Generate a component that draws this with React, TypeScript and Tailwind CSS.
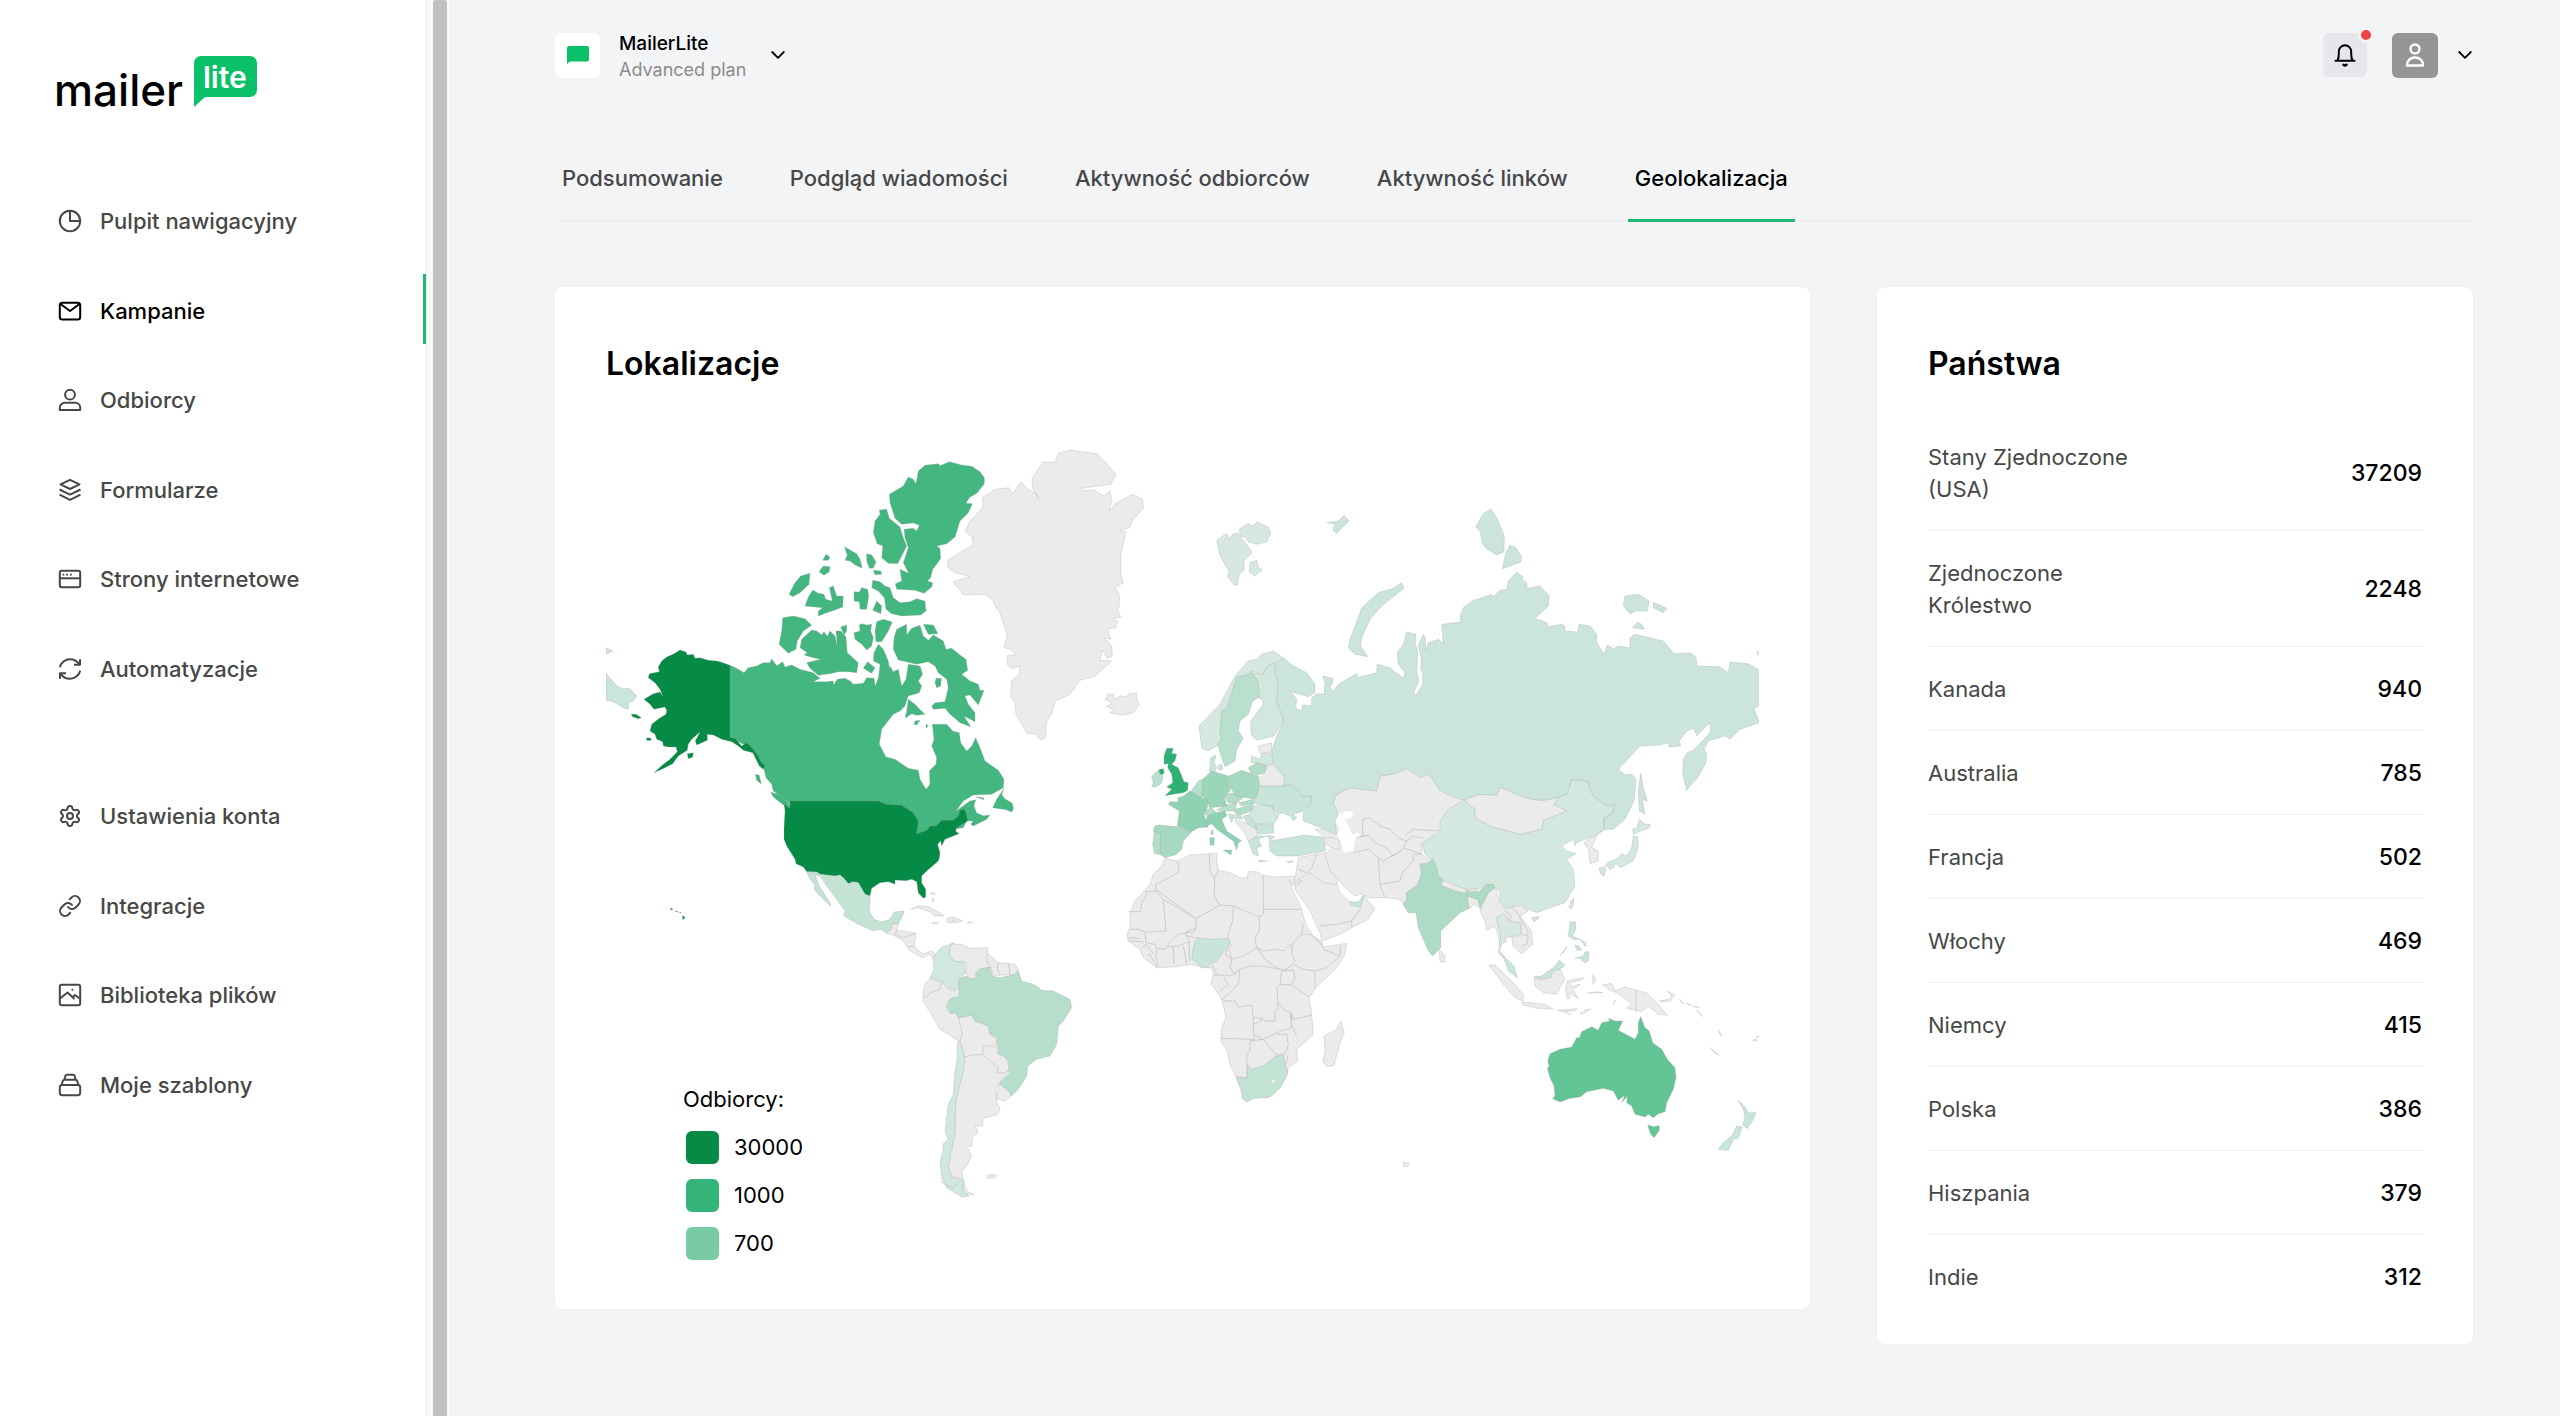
import React from "react";
import { Link as LinkIcon, Settings } from "lucide-react";

type TileId = "A" | "B" | "C" | "D" | "E" | "F" | "G";
type Part = [TileId, string];

/* Outlines are digitised on tiles; every tile has an origin and is three units per map unit. */
const ORIGIN: Record<TileId, [number, number]> = {
  A: [600, 430],
  B: [920, 430],
  C: [780, 760],
  D: [1120, 500],
  E: [1110, 820],
  F: [1400, 480],
  G: [1380, 820],
};

function toPoints(parts: Part[]): string {
  return parts
    .map(([tile, pts]) => {
      const [ox, oy] = ORIGIN[tile];
      return pts
        .trim()
        .split(/\s+/)
        .map((p) => {
          const [x, y] = p.split(",").map(Number);
          return `${(ox + x / 3).toFixed(1)},${(oy + y / 3).toFixed(1)}`;
        })
        .join(" ");
    })
    .join(" ");
}

const GRAY = "#ebebeb";
const US = "#068b47";
const CA = "#43b77f";
const RU = "#cbe5da";
const L1 = "#d3e8df";
const L2 = "#c8e5d9";
const L3 = "#b9dfce";

/* Each entry: fill, tile, outlines separated by ";" */
const LAND: [string, TileId, string][] = [
  [CA, "A", `390,703 410,712 432,725 445,710 470,705 490,695 510,695 515,683 530,704 548,692 555,708 575,702 600,715 640,725 660,742 640,752 680,752 700,750 700,762 712,745 735,742 750,750 760,760 790,757 800,740 822,742 826,765 838,735 860,730 870,705 880,722 895,715 905,765 918,745 925,700 960,705 968,730 955,750 965,765 958,785 925,795 915,825 900,840 880,850 845,895 838,940 858,978 885,985 925,1012 955,1018 960,1045 978,1075 990,1060 988,1020 1008,1000 1010,980 995,945 1002,925 997,880 1040,880 1058,900 1078,905 1082,935 1100,960 1115,945 1127,920 1140,950 1155,990 1195,1018 1212,1045 1210,1070 1175,1090 1120,1092 1090,1110 1068,1140 1085,1128 1110,1110 1127,1106 1122,1125 1130,1146 1150,1154 1170,1152 1160,1165 1120,1185 1112,1180 1120,1170 1100,1170 1090,1190 950,1210 940,1160 570,1118 548,1100 520,1080 515,1060 498,1040 492,1015 478,990 460,960 430,940 390,920;
512,1083 540,1092 565,1115 570,1134 545,1118 520,1098; 466,1030 478,1033 484,1060 470,1048;
1212,1072 1205,1090 1215,1104 1235,1115 1241,1132 1235,1143 1218,1136 1178,1130 1190,1105; 1127,1097 1150,1100 1152,1106;
1048,92 1085,102 1115,106 1140,122 1153,140 1153,158 1132,185 1108,200 1098,217 1117,218 1105,245 1080,270 1065,318 1040,338 1010,345 1020,352 1022,382 1010,400 998,415 992,440 982,450 998,455 995,468 972,487 945,478 890,475 886,458 905,450 900,415 926,427 910,395 925,350 915,320 912,295 940,292 950,300 958,283 940,276 905,280 885,262 870,215 868,190 910,165 925,138 940,145 948,158 955,120 975,103 1015,98 1020,104;
838,237 860,235 868,262 900,288 910,320 920,345 905,375 893,398 865,397 845,380 848,345 832,338 820,305 825,270 840,250;
733,347 770,368 780,385 787,412 765,402 750,390 735,388 742,372; 800,368 815,372 828,392 820,412 808,412 800,390; 820,418 842,420 846,430 825,431; 678,370 690,378 685,388 668,388; 670,405 690,407 688,422 672,433 657,422;
630,427 627,460 600,485 578,497 567,490 585,455 602,435;
638,477 655,487 672,490 677,505 697,510 688,470 700,465 710,495 730,495 728,528 705,537 680,545 655,555 655,540 668,530 615,525 625,498;
762,482 778,483 785,470 803,475 806,495 800,535 780,535 778,512 762,510;
818,448 840,452 855,465 870,470 880,500 900,515 930,512 950,503 975,510 978,540 962,552 905,555 875,548 858,535 853,500 835,480 815,470; 830,510 845,525 843,548 818,538;
548,560 580,555 615,563 635,583 610,600 592,630 588,655 565,667 537,640 545,600;
600,650 605,625 635,597 650,600 665,612 672,602 682,616 690,600 705,615 712,645 708,600 722,600 738,618 742,665 775,695 770,725 745,722 715,722 690,728 655,733 630,712 620,695 662,685 640,680 612,672 622,665;
722,588 740,582 740,600 732,612; 762,605 780,600 778,582 785,578 800,582 815,580 812,600 820,620 815,645 800,657 785,640 765,625;
830,572 850,565 877,573 865,600 845,632 828,632 825,600; 835,640 850,655 865,690 872,745 835,745 840,700 820,690 822,665; 803,692 825,710 815,727 790,712;
890,595 920,580 920,612 935,592 960,583 970,615 985,628 1000,612 1030,630 1038,655 1055,652 1080,672 1098,685 1103,718 1085,730 1110,750 1135,760 1140,778 1152,778 1135,822 1110,792 1095,795 1105,820 1125,845 1125,872 1092,855 1112,887 1080,875 1050,850 1035,832 1000,835 995,825 1005,815 1035,812 1045,770 1040,745 1015,725 1005,705 985,692 950,700 895,687 880,655 882,620;
970,580 1000,582 1014,608 985,610; 1008,742 1024,742 1022,765 1010,770 1005,755; 925,805 945,820 962,838 975,850 950,853 935,848 915,862 920,840; 945,870 960,868 950,882 942,880; 978,878 985,885 978,892`],
  [US, "A", `240,657 258,663 262,672 280,670 285,682 300,680 325,688 350,690 362,693 390,703 390,920 405,922 425,945 440,935 460,955 475,975 482,992 495,1003 490,1015 478,1005 468,985 458,965 430,958 415,945 395,932 365,925 340,912 322,910 322,928 290,942 286,930 300,903 275,925 265,940 262,958 235,975 218,998 195,1010 162,1025 190,1000 210,985 232,962 228,948 205,948 190,945 188,932 170,925 165,910 150,900 155,880 178,862 198,850 200,838 195,828 162,835 150,820 132,805 160,788 180,783 188,795 180,775 165,755 145,740 148,728 178,722 175,708 185,690 200,678 222,668; 93,850 108,850 124,860 115,863 98,857; 138,922 150,920 155,927 142,929; 262,968 280,965 278,978 265,983; 210,1433 216,1432 218,1436 212,1437; 225,1440 232,1440 232,1444; 238,1443 244,1445 240,1447; 247,1453 256,1460 248,1466`],
  [US, "C", `12,128 28,142 30,120 295,120 320,130 365,133 400,155 415,180 410,218 440,208 450,195 468,195 485,178 520,178 535,165 540,148 553,143 560,160 563,180 530,200 527,210 537,218 520,225 495,235 485,255 482,240 473,250 480,275 478,292 475,300 440,330 425,345 425,365 437,385 437,408 430,412 415,395 410,362 395,355 378,359 345,357 345,370 325,362 300,365 275,382 270,405 255,400 235,365 218,362 205,368 190,350 180,342 165,345 120,340 110,333 80,332 70,318 48,308 45,295 20,255 12,235 12,200 15,150`],
  [GRAY, "B", `450,57 530,68 560,98 588,130 572,160 485,172 488,180 520,176 552,195 570,180 575,210 568,238 590,215 637,190 668,205 670,232 640,265 628,290 598,298 618,302 602,370 602,430 610,455 585,470 598,492 598,525 592,535 602,558 580,562 592,572 587,590 562,595 573,625 552,620 575,645 577,675 562,682 548,657 540,688 575,690 525,735 480,748 450,790 405,810 395,850 380,870 375,922 362,926 345,908 322,908 288,850 285,815 272,795 275,750 298,730 298,705 275,713 262,700 263,673 288,672 272,655 252,650 262,615 240,545 222,520 220,508 195,490 130,492 100,453 150,436 105,425 83,408 83,388 158,342 158,320 135,300 150,270 188,230 188,200 225,175 268,170 277,190 303,153 322,175 345,185 358,205 337,170 337,140 370,93 405,95 415,67;
555,805 565,790 580,790 583,805 600,795 618,797 630,787 650,787 650,805 658,820 640,845 608,853 570,845 580,838 560,825 575,820 570,812`],
  ["#c3e4d5", "C", `80,332 110,333 120,340 165,345 180,342 190,350 205,368 218,362 235,365 255,400 270,405 268,450 282,475 305,483 330,475 342,453 372,450 368,465 355,488 335,490 337,502 320,517 302,505 280,510 235,490 192,465 195,450 170,415 140,375 120,345 105,342 118,375 150,425 153,436 130,415 102,385 105,372 90,355`],
  [GRAY, "C", `320,517 337,502 335,490 355,488 350,508 375,510 408,517 403,555 415,568 430,578 455,570 465,580 460,592 448,580 430,590 410,582 385,565 370,540 345,525; 392,445 415,434 445,437 470,450 492,465 465,465 450,452 415,440; 500,472 520,468 548,480 530,485 500,484; 455,484 475,486 460,489; 562,483 577,484 565,487; 449,400 458,394 467,400 458,399; 456,411 463,420 459,425;
520,545 525,550 545,550 570,562 622,560 625,590 620,600 632,620 590,625 585,640 590,650 572,655 560,640 560,605 520,600 508,580 510,560; 622,580 640,590 655,605 705,610 715,625 705,640 655,643 640,645 632,615 620,600;
450,652 485,665 510,687 528,688 530,700 500,725 500,750 528,755 545,770 547,820 540,842 480,805 430,720 428,700 435,670; 535,770 575,762 585,780 625,795 630,820 650,835 648,860 612,855 605,880 580,882 555,888 540,842 547,820; 612,855 645,855 655,880 675,885 688,920 680,937 650,935 655,920 608,885;
555,888 580,882 605,880 655,920 650,937 675,937 688,925 658,967 648,985 650,1020 660,1045 650,1062 610,1072 607,1095 585,1095 595,1115 578,1125 575,1155 562,1158 575,1185 560,1215 545,1230 548,1252 518,1250 505,1220 515,1170 525,1100 525,1030 535,960 550,900; 550,1255 560,1290 582,1300 550,1300; 658,967 690,990 692,1005 675,1020 648,1015; 622,1243 636,1240 650,1243 645,1250 622,1252`],
  ["#d0e8df", "C", `520,545 510,560 508,580 520,600 555,603 557,640 535,648 538,685 510,685 485,663 450,650 462,625 460,590 470,575 485,558 505,552; 540,842 550,870 555,905 545,950 530,1010 525,1060 525,1120 510,1180 505,1220 518,1250 548,1255 550,1290 567,1305 545,1308 500,1280 485,1250 480,1200 490,1170 488,1150 505,1135 495,1110 505,1030 520,1000 525,930 532,890 532,845`],
  ["#b7decd", "C", `630,618 637,645 660,650 705,640 715,628 725,660 750,667 770,675 785,688 820,690 850,705 870,715 875,740 850,780 835,795 830,850 810,885 770,895 743,915 740,945 715,985 695,1005 690,995 658,967 688,935 685,900 672,885 655,880 650,830 630,820 625,795 585,780 575,762 535,770 528,755 510,758 500,735 510,715 535,705 538,650 560,645 572,655 590,650 587,635 600,625`],
  [GRAY, "E", `165,112 203,120 240,102 298,98 322,97 320,125 325,148 360,155 390,170 412,170 415,152 440,152 460,163 500,168 552,165 555,185 548,195 538,178 548,208 575,265 580,285 590,315 610,345 635,362 640,378 710,367 705,400 680,440 617,500 597,530 605,580 610,640 560,685 563,720 535,740 530,765 510,800 480,828 430,832 410,842 397,832 395,810 378,768 360,730 352,690 332,660 335,620 347,590 340,550 330,525 303,490 310,460 305,440 280,440 245,430 200,437 140,440 100,410 90,385 55,360 50,340 60,320 60,275 75,240 120,190 130,160 155,135; 693,600 703,635 690,665 672,733 650,737 638,720 645,690 642,645 680,625;
555,185 565,150 600,155 640,185 680,190 690,215 715,240 750,250 762,222 775,240 795,262 775,295 725,320 690,340 635,360 630,335 600,270 580,240 555,205; 565,110 600,103 650,95 665,150 685,165 680,190 640,185 600,155 565,175 552,190 560,140`],
  [L2, "E", `260,350 300,355 355,352 358,370 335,400 320,420 300,428 290,440 275,440 262,425 245,415 250,380; 720,243 745,243 762,222 758,240 750,258 722,253`],
  ["#c3e4d5", "E", `378,768 410,772 412,735 425,748 460,735 500,705 520,702 528,740 533,745 530,765 510,800 480,828 430,832 410,842 397,832 395,810`],
  [GRAY, "E", `480,782 492,772 500,780 488,790; 516,745 523,740 525,752 518,753`],
  [GRAY, "D", `585,985 610,985 645,1000 640,905 650,880 690,860 770,870 780,825 825,818 865,800 905,820 925,818 965,870 1030,893 985,935 960,985 905,1030 905,1060 930,1080 900,1100 905,1120 895,1150 865,1170 870,1195 850,1205 835,1195 795,1190 745,1190 730,1178 705,1185 675,1160 650,1130 630,1110 615,1060 635,1040 610,1005`],
  ["#ffffff", "D", `645,960 655,940 680,930 700,933 695,950 675,955 690,985 697,1000 715,995 722,1005 705,1015 700,1050 670,1055 665,1030 650,1000 660,985`],
  ["#2fb176", "D", `140,742 160,742 155,757 170,760 165,780 155,790 175,800 185,825 192,842 205,845 203,868 190,875 160,880 135,884 155,865 140,858 158,845 155,820 143,800 145,788 132,790 132,765; 118,805 130,803 133,815 125,823 117,815`],
  [L3, "D", `118,805 117,815 130,825 125,845 110,857 95,857 100,845 95,825`],
  ["#d6e8df", "D", `290,118 320,97 328,115 340,97 355,97 397,155 372,180 372,207 357,220 352,252 342,252 322,225 328,212 300,165; 357,85 385,68 400,75 410,62 445,78 452,97 440,123 410,130 385,123 375,108 362,105; 390,185 410,178 415,198 427,207 405,225 388,213; 237,675 300,610 345,525 385,480 410,475 425,460 460,450 490,470 480,490 460,485 440,500 430,520 395,510 385,520 350,530 320,620 305,630 300,690 305,715 290,735 262,750 245,740`],
  ["#d2e8de", "D", `392,515 430,520 440,500 460,485 475,500 468,520 475,545 470,600 492,660 462,705 410,718 393,700 392,660 430,610 428,597 415,590 415,545; 392,785 395,765 420,775 425,757 455,760 460,785 440,795 410,785; 400,915 455,912 475,950 460,970 400,968 385,945`],
  ["#b9dfce", "D", `350,530 385,520 395,510 415,545 418,588 398,600 385,640 360,660 355,690 370,712 350,745 345,780 315,797 300,755 293,730 305,715 300,690 305,630 322,620; 235,840 255,832 248,865 245,890 210,875; 315,912 350,905 345,930 315,930 290,928`],
  [L2, "D", `272,770 288,762 283,785 290,800 283,815 268,810; 293,795 305,790 308,805 297,808; 418,855 490,855 515,850 545,885 575,885 575,905 550,930 520,940 530,950 520,960 510,945 485,935 470,945 455,915 410,910 402,905 412,880; 405,970 460,972 462,995 415,1000; 370,945 385,942 405,970 410,985 385,975; 325,940 360,942 370,955 340,950 335,965; 385,1020 410,1005 440,1005 415,1015 425,1035 410,1040 415,1065 400,1060; 415,1078 442,1080 420,1083; 500,1082 520,1080 510,1086; 447,1020 480,1015 520,1008 550,1003 610,1008 617,1050 560,1060 535,1065 470,1065 450,1050; 440,1003 465,1008 450,1017`],
  ["#b0dcc8", "D", `385,800 410,785 440,795 435,815 415,822 392,815; 310,880 345,875 370,890 350,905 325,905; 355,905 400,895 402,908 365,915; 345,925 400,910 395,930 360,942 345,935; 250,930 275,920 288,935 265,945 250,940`],
  [GRAY, "D", `415,735 455,725 455,755 420,757; 440,795 460,790 475,800 495,830 490,855 420,855 418,830 435,815; 345,955 375,965 410,985 410,1005 385,1020 370,990 350,970; 455,915 475,940 470,950; 615,1010 640,1010 660,1020 655,1045 635,1040 615,1030`],
  ["#a6d9c1", "D", `327,825 365,808 415,825 418,855 412,880 405,895 350,885 330,860; 105,975 115,972 172,977 215,992 190,1020 185,1045 165,1062 135,1070 120,1060 120,1000 100,990`],
  ["#b5ddcb", "D", `103,992 122,995 120,1060 103,1058 98,1030`],
  ["#9bd6b9", "D", `248,835 275,810 325,825 330,870 312,885 320,915 268,920 262,895 245,885`],
  ["#8fd2b3", "D", `210,870 245,890 265,895 262,920 250,940 260,960 265,978 235,980 215,992 172,975 178,930 145,910 150,902 175,903 173,890 190,885; 258,960 262,945 285,935 315,930 320,945 305,955 320,990 365,1020 355,1025 350,1047 340,1020 290,985 275,968 260,975; 310,1047 335,1047 333,1062; 270,1010 283,1010 282,1033 270,1032; 278,985 280,1000 272,998`],
  [RU, "D", `845,245 852,262 785,315 750,355 725,410 722,435 743,467 705,460 685,440 690,415 707,370 725,320 775,275 820,262; 620,65 655,60 672,43 687,60 668,78 650,97 638,88 645,68`],
  [RU, "F", `273,84 293,115 313,165 312,212 290,222 262,205 248,190 240,150 227,138 250,98; 330,193 347,200 365,228 362,243 307,263 318,215; 675,345 715,340 747,360 742,390 710,390 690,398 670,375; 760,364 800,382 790,395 760,380; 697,440 712,424 725,430 733,445; 1070,515 1082,503 1082,522 1075,523; 722,877 730,920 742,960 727,955 735,1000 718,990 715,930`],
  [RU, "A", `18,727 50,765 65,772 90,773 110,795 100,810 85,815 85,835 70,830 40,812 18,808; 18,650 38,660 18,669`],
  [L1, "F", `192,957 225,985 225,1010 270,1035 360,1060 425,1045 430,1018 500,990 462,970 470,950 500,940 515,895 560,900 580,945 620,975 645,970 635,1000 612,1010 612,1045 580,1065 530,1085 525,1095 520,1075 485,1095 500,1110 528,1118 500,1135 520,1165 525,1215 495,1265 450,1280 410,1295 375,1280 340,1278 315,1285 300,1265 300,1235 280,1215 260,1210 235,1225 205,1225 150,1215 115,1195 100,1150 90,1135 75,1120 65,1090 120,1050 120,1020 145,985; 395,1310 415,1305 417,1312 402,1322; 507,1280 512,1260 522,1252 520,1272 513,1285;
718,1015 735,1030 750,1030 750,1040 715,1053 700,1060 698,1045 712,1040; 700,1065 713,1068 715,1100 700,1140 660,1160 650,1148 625,1157 615,1155 625,1143 650,1135 665,1118 680,1125 695,1100; 597,1162 612,1157 618,1165 612,1185 602,1178; 625,1160 645,1155 630,1166`],
  [GRAY, "F", `192,957 235,940 290,942 300,918 350,940 395,955 430,958 475,950 462,970 500,990 430,1018 425,1045 360,1060 270,1035 225,1010 225,985; 612,1045 590,1065 575,1100 595,1110 595,1140 570,1148 565,1105 552,1085`],
  ["#aedbc6", "G", `120,128 140,128 160,115 172,145 172,160 190,178 185,195 257,215 262,205 270,212 295,212 320,190 340,190 345,200 325,215 310,245 300,265 295,240 262,225 268,262 240,275 182,330 182,380 158,405 145,390 115,320 108,275 85,275 68,248 80,240 78,215 110,195 125,160`],
  [GRAY, "G", `190,177 205,185 257,205 257,217 220,208 183,192; 262,225 295,237 295,258 283,250 268,264; 268,205 290,203 292,211 272,211; 178,385 195,405 195,422 180,422; 345,200 358,235 355,250 378,270 350,290 352,310 365,335 360,380 355,345 345,315 320,328 315,300 300,270 310,245 325,215; 378,272 395,258 425,252 445,270 420,285 455,330 458,370 425,398 400,378 395,350 425,340 420,305 385,300; 562,375 552,392 540,402 555,385;
327,432 345,432 395,480 430,520 430,540 405,530 370,490; 425,543 455,545 495,550 520,565 470,562 430,552; 462,470 490,475 520,445 540,445 555,473 545,490 530,520 490,515 465,495; 557,500 562,480 580,475 612,470 600,478 570,485 575,497 600,490 580,505 595,535 570,515 568,533 560,533; 532,568 560,565 592,563 585,570 545,572; 555,574 572,581; 600,580 615,568 632,564 615,575; 622,517 668,515 650,512; 640,460 648,475 640,490 637,475; 700,550 706,537 702,548; 668,492 695,487 705,510 735,498 770,508 800,515 830,545 862,583 835,580 805,555 785,572 740,562 755,550 720,520 685,505; 838,540 865,535 875,525 862,510 885,522 870,540 845,543; 898,533 912,548 905,545; 918,546 935,553; 938,556 958,560; 950,566 970,587 958,578; 1015,627 1025,645 1018,638; 990,680 1018,702 1005,697; 1118,658 1130,653 1128,661; 1130,648 1141,643 1135,650; 70,1022 88,1028 84,1036 72,1037`],
  ["#d6e8df", "G", `350,290 375,278 385,300 420,305 425,338 395,347 375,350 380,362 368,365 358,388 368,400 375,408 370,410 355,397 362,345`],
  [L2, "G", `370,408 385,418 402,435 412,470 385,450; 462,467 485,465 520,440 538,418 555,432 540,445 520,450 512,470 480,475; 570,303 587,303 587,325 577,345 592,352 618,365 617,378 600,355 580,355 565,345; 585,372 597,375 605,388 590,388; 585,412 610,405 615,392 627,392 625,420 615,427 600,412; 1073,838 1095,858 1105,875 1128,875 1120,895 1102,923 1088,912 1095,890 1090,865; 1070,915 1087,918 1075,952 1060,955 1045,988 1015,985 1030,965 1055,945`],
  ["#63c495", "G", `782,587 795,620 808,630 818,665 845,685 862,715 885,740 888,770 880,805 860,845 855,872 835,878 820,890 805,880 795,888 765,880 755,855 740,845 742,825 725,845 735,822 715,838 700,810 670,802 620,812 600,828 570,832 540,843 518,833 525,825 522,795 510,770 502,740 508,738 503,720 510,698 540,685 575,678 590,650 598,650 605,632 635,617 655,628 665,605 690,600 685,592 705,600 728,600 715,628 765,655 775,635 775,605; 803,912 820,917 838,914 838,928 822,950 812,940`],
];

const RUSSIA = toPoints([
  ["D", `465,490 490,470 520,495 560,515 585,550 585,575 565,587 540,580 512,572 530,595 527,620 545,632 548,612 575,615 575,590 592,578 612,580 615,545 608,525 638,532 638,545 630,560 640,570 655,550 712,517 710,530 770,515 772,490 810,500 850,532 855,515 835,490 832,455 850,430 860,393 888,400 886,430 893,450 890,515 897,540 880,578 888,582 908,550 908,515 902,505 904,470 895,435 910,400 916,410 918,447 925,425 955,415 970,428 965,370 1022,363 1020,345 1030,320 1060,298 1085,290 1115,280 1120,288 1140,268 1160,265 1165,240 1190,213 1210,228 1205,235 1220,245 1222,262 1260,255 1288,285 1285,315 1245,352 1280,365 1283,378`],
  ["F", `445,437 485,430 495,435 495,450 533,453 537,430 570,435 590,460 590,485 613,520 622,492 640,503 655,495 690,500 690,470 705,460 790,480 822,518 870,515 888,528 890,555 960,557 985,575 990,543 1045,548 1082,570 1082,672 1062,682 1078,725 1020,745 990,775 975,765 925,780 912,805 920,820 918,845 890,895 878,905 860,928 848,880 850,835 862,815 880,808 930,755 932,728 918,735 890,765 882,742 860,750 838,780 842,795 808,798 805,785 780,792 720,795 655,865 675,882 695,880 708,895 702,960 675,1015 640,1045 612,1045 612,1010 635,1000 645,970 620,975 580,945 560,900 515,895 500,940 470,950 430,958 395,955 350,940 300,918 290,942 235,940 192,957 165,950 120,930 88,878 60,890 20,862`],
  ["D", `825,818 780,825 770,870 690,860 650,880 640,905 655,940 645,960 650,1000 615,985 550,960 550,935 575,905 575,885 545,885 515,850 490,855 495,830 460,790 455,750 470,705 492,660 470,600 475,545 465,520`],
]);

/* Inner borders between neighbouring countries of the same colour. */
const BORDERS: [TileId, string][] = [
  ["C", "350,508 345,525; 350,522 370,530 408,517; 385,557 403,555; 655,605 652,620 660,643; 685,607 690,640; 485,665 478,685 450,695 438,710 428,705; 520,470 520,484; 482,1262 520,1282 535,1262"],
  ["E", `203,120 207,152 160,180 137,190 137,210; 55,272 92,272 95,245 108,225 108,212 137,210; 137,205 258,293 330,252 312,225 315,175 300,150 298,98; 325,148 312,175; 330,252 370,255 448,287 460,280 460,163; 460,265 575,265; 137,210 160,235 168,330 105,333 85,325 60,325; 160,235 258,293 258,320 225,335 205,340 180,365 165,385 140,382 135,370 108,365 105,340 100,330; 258,320 250,335 225,335 232,345 255,350; 370,255 368,300 355,335 355,352 365,375; 225,340 240,360 205,375 175,378; 190,378 192,430; 220,375 230,430; 238,362 238,420; 140,385 138,410 145,435; 92,385 108,370 130,400; 110,405 120,400 140,438; 55,350 90,352; 60,360 100,362; 448,287 448,330 435,350 440,380 400,405 365,415 358,385; 440,380 460,390 500,385 520,390 540,370 545,385 550,365 575,340 580,310; 365,415 360,440 372,460 390,445 420,435 460,435; 440,380 470,420 510,445; 545,385 545,400 555,420 550,430 525,447 510,445 460,435; 575,340 600,340 630,365 635,375 640,385 690,405 650,440 615,450 580,445 550,430; 615,450 615,500; 692,375 690,405; 390,445 385,490 355,520 335,535 345,540 375,540 385,558 425,552 430,590 450,590 470,600 495,600 495,570 505,565 500,500 510,490 515,450; 515,450 550,447 555,470 545,490 510,492; 545,492 597,528; 505,545 520,565 545,575 550,595 607,582; 310,462 340,462 345,475 355,490 330,510; 385,450 360,465 345,462; 305,430 320,460; 360,370 345,400 365,415; 430,590 430,640 435,655 332,652; 430,640 460,655 500,635 530,625 545,620 540,575; 450,590 455,600 430,610; 420,660 420,690 410,700 412,770 380,768; 435,655 420,660 460,655 490,690 500,705 460,735 425,745 412,730; 500,640 530,640 535,670 525,700 495,700; 545,580 545,610 560,645; 565,175 575,180 560,190; 590,155 605,140 620,100; 630,315 680,310 725,300 755,258; 725,300 725,320; 565,145 590,155; 535,700 525,740`],
  ["D", "728,1005 728,955 750,950 780,975 810,985 835,1010 860,1020 880,1005 910,1012; 860,1020 850,1040 905,1060; 708,1010 745,1003 765,1025 800,1040 820,1065; 700,1055 745,1045 775,1070 790,1080 850,1045; 775,1070 780,1150 795,1190; 780,1150 840,1140 850,1110 880,1080 880,1060 905,1060; 855,1005 880,985 955,990; 820,1065 850,1045; 728,1005 745,1003"],
  ["G", "768,508 768,572; 385,300 395,285 378,272; 395,258 415,280 430,310 445,330 440,345; 425,340 445,345 440,370 425,375"],
];

function WorldMap() {
  return (
    <svg
      viewBox="606 440 1153 770"
      className="block w-full"
      role="img"
      aria-label="Mapa odbiorców"
      strokeLinejoin="round"
    >
      {LAND.map(([fill, tile, outlines], i) => (
        <g key={i} fill={fill} stroke={fill === "#ffffff" ? "none" : "#9a9a9a"} strokeOpacity={0.28} strokeWidth={1}>
          {outlines.split(";").map((o, k) => (
            <polygon key={k} points={toPoints([[tile, o]])} />
          ))}
        </g>
      ))}
      <polygon points={RUSSIA} fill={RU} stroke="#9a9a9a" strokeOpacity={0.28} />
      <g fill="none" stroke="#cccccc" strokeWidth={1}>
        {BORDERS.map(([tile, lines]) =>
          lines.split(";").map((l, k) => <polyline key={tile + k} points={toPoints([[tile, l]])} />),
        )}
      </g>
    </svg>
  );
}

function Icon({ children }: { children: React.ReactNode }) {
  return (
    <svg viewBox="0 0 24 24" className="size-6 shrink-0" fill="none" stroke="currentColor" strokeWidth={2} strokeLinejoin="round" aria-hidden="true">
      {children}
    </svg>
  );
}

const mainNav: { label: string; active?: boolean; icon: React.ReactNode }[] = [
  { label: "Pulpit nawigacyjny", icon: <Icon><circle cx="12" cy="12" r="10.2" /><path d="M12 2v10h10" /></Icon> },
  { label: "Kampanie", active: true, icon: <Icon><rect x="1.8" y="3.8" width="20.4" height="16.8" rx="2.6" /><path d="M2.5 5l9.5 7 9.5-7" /></Icon> },
  { label: "Odbiorcy", icon: <Icon><circle cx="12" cy="6.7" r="4.9" /><path d="M1.8 22v-2.200a5 5 0 0 1 5-5h10.400a5 5 0 0 1 5 5V22z" /></Icon> },
  { label: "Formularze", icon: <Icon><path d="M12 1.800l9.500 4.600L12 11 2.500 6.400z" /><path d="M1.500 11.500L12 16.600l10.500-5.100M1.500 16.600L12 21.800l10.500-5.200" /></Icon> },
  { label: "Strony internetowe", icon: <Icon><rect x="1.800" y="3.800" width="20.400" height="16.400" rx="2" /><path d="M2 11.300h20" /><path d="M4.500 7.600h1.800M8.200 7.600H10M12 7.600h1.800" strokeWidth={1.600} /></Icon> },
  { label: "Automatyzacje", icon: <Icon><path d="M1.800 10.200C3 5.500 7.200 2.200 12 2.200c3.900 0 7.400 2.100 9.300 5.400M22.200 13.800C21 18.500 16.800 21.800 12 21.800c-3.900 0-7.400-2.100-9.300-5.400" /><path d="M22 2.200v5.600h-6M2 21.800v-5.600h6" /></Icon> },
];

const secondaryNav: { label: string; icon: React.ReactNode }[] = [
  { label: "Ustawienia konta", icon: <Settings className="size-6 shrink-0" strokeWidth={2} aria-hidden="true" /> },
  { label: "Integracje", icon: <LinkIcon className="size-6 shrink-0" strokeWidth={2} aria-hidden="true" /> },
  { label: "Biblioteka plików", icon: <Icon><rect x="1.800" y="1.800" width="20.400" height="20.400" rx="2" /><path d="M2 15.500l7.500-6 7 6.500M14.500 14.200l2.500-2.200 5 3.800" /><circle cx="14.400" cy="6.700" r="1" fill="currentColor" stroke="none" /></Icon> },
  { label: "Moje szablony", icon: <Icon><rect x="1.800" y="12" width="20.400" height="10.200" rx="2.400" /><path d="M3.600 12l1-3.600A2.400 2.400 0 0 1 6.900 6.700h10.200a2.400 2.400 0 0 1 2.300 1.700l1 3.600M6.500 6.500l.6-3A2 2 0 0 1 9 1.800h6a2 2 0 0 1 1.900 1.700l.6 3" /></Icon> },
];

function NavItem({ label, icon, active }: { label: string; icon: React.ReactNode; active?: boolean }) {
  return (
    <a
      href="#"
      aria-current={active ? "page" : undefined}
      className={
        active
          ? "flex h-[70px] items-center gap-[18px] border-r-3 border-[#1fb970] pt-1 pl-[58px] font-medium text-black"
          : "flex h-[70px] items-center gap-[18px] border-r-3 border-transparent pt-1 pl-[58px] font-medium text-[#474747]"
      }
    >
      {icon}
      <span>{label}</span>
    </a>
  );
}

function Logo() {
  return (
    <svg viewBox="-4 0 208 66" className="h-[66px] w-[208px]" role="img" aria-label="MailerLite">
      <text x="-2" y="50" fontFamily="Inter, sans-serif" fontSize="44" fontWeight="500" fill="#000000">mailer</text>
      <path d="M145 0h49a7 7 0 0 1 7 7v27a7 7 0 0 1-7 7h-45l-11 10V7a7 7 0 0 1 7-7z" fill="#0ac169" />
      <text x="147" y="32" fontFamily="Inter, sans-serif" fontSize="30" fontWeight="600" fill="#ffffff">lite</text>
    </svg>
  );
}

function Chevron() {
  return (
    <svg viewBox="0 0 16 10" className="h-[10px] w-4" fill="none" stroke="#000000" strokeWidth={1.800} strokeLinecap="round" strokeLinejoin="round" aria-hidden="true">
      <path d="M2.200 2L8 7.800 13.800 2" />
    </svg>
  );
}

const tabs = ["Podsumowanie", "Podgląd wiadomości", "Aktywność odbiorców", "Aktywność linków", "Geolokalizacja"];

const countries: [string, number][] = [
  ["Stany Zjednoczone (USA)", 37209],
  ["Zjednoczone Królestwo", 2248],
  ["Kanada", 940],
  ["Australia", 785],
  ["Francja", 502],
  ["Włochy", 469],
  ["Niemcy", 415],
  ["Polska", 386],
  ["Hiszpania", 379],
  ["Indie", 312],
];

export default function App() {
  return (
    <div className="flex min-h-screen bg-[#f3f4f6] font-['Inter',sans-serif] text-[22px] leading-8 text-black">
      <aside className="w-[426px] shrink-0 bg-white pt-[56px]">
        <a href="#" className="ml-[52px] block w-fit">
          <Logo />
        </a>
        <nav aria-label="Główna" className="mt-[62px] flex flex-col gap-[58px]">
          <div className="grid h-[537px] grid-rows-6">
            {mainNav.map((n) => (
              <NavItem key={n.label} {...n} />
            ))}
          </div>
          <div className="grid h-[358px] grid-rows-4">
            {secondaryNav.map((n) => (
              <NavItem key={n.label} {...n} />
            ))}
          </div>
        </nav>
      </aside>

      <div className="w-[25px] shrink-0 border-x border-[#ebebeb] bg-[#fafafa] px-1 pl-[6px]">
        <div className="h-full w-[14px] rounded-t-[3px] bg-[#c1c1c1]" />
      </div>

      <main className="min-w-0 flex-1 pr-[87px] pb-[72px] pl-[104px]">
        <header className="flex items-center justify-between pt-[29px]">
          <button type="button" className="flex items-center text-left">
            <span className="flex size-[45px] items-center justify-center rounded-md bg-white">
              <svg viewBox="0 0 22 18" className="h-[18px] w-[22px]" aria-hidden="true">
                <path d="M2 0h18a2 2 0 0 1 2 2v11.500a2 2 0 0 1-2 2H3L0 18V2a2 2 0 0 1 2-2z" fill="#0ac169" />
              </svg>
            </span>
            <span className="ml-[19px] flex flex-col">
              <span className="text-[19px] leading-[30px] font-medium">MailerLite</span>
              <span className="text-[18px] leading-[22px] text-[#8c8c8c]">Advanced plan</span>
            </span>
            <span className="ml-6">
              <Chevron />
            </span>
          </button>
          <div className="flex items-center">
            <button type="button" aria-label="Powiadomienia" className="relative flex size-11 items-center justify-center rounded-md bg-[#e5e7eb]">
              <svg viewBox="0 0 24 24" className="size-6" fill="none" stroke="#000000" strokeWidth={2} strokeLinejoin="round" strokeLinecap="round" aria-hidden="true">
                <path d="M2.500 17.800h19M4.600 17.500c.9-2 1.200-3.600 1.200-6.300V8.500a6.200 6.200 0 0 1 12.400 0v2.700c0 2.700.3 4.300 1.200 6.300" />
                <path d="M10.500 21.800q1.500 1.200 3 0" strokeWidth={2.400} />
              </svg>
              <span className="absolute -top-[6px] -right-[7px] size-4 rounded-full border-3 border-[#f3f4f6] bg-[#ef4444]" />
            </button>
            <button type="button" aria-label="Konto" className="ml-[25px] flex items-center">
              <span className="flex h-[45px] w-[46px] items-center justify-center rounded-md bg-[#959595]">
                <svg viewBox="0 0 20 24" className="h-6 w-5" fill="none" stroke="#ffffff" strokeWidth={2.400} strokeLinejoin="round" aria-hidden="true">
                  <circle cx="10" cy="6" r="4.500" />
                  <path d="M2 22.500c0-5 3.300-8 8-8s8 3 8 8z" />
                </svg>
              </span>
              <span className="ml-[19px]">
                <Chevron />
              </span>
            </button>
          </div>
        </header>

        <nav aria-label="Raport" className="mt-[81px] flex gap-[53px] border-b border-[#eaebed]">
          {tabs.map((t) => (
            <a
              key={t}
              href="#"
              className={
                t === "Geolokalizacja"
                  ? "-mb-[2px] border-b-3 border-[#1fb970] px-[7px] pb-[25px] font-medium whitespace-nowrap text-black"
                  : "-mb-[2px] border-b-3 border-transparent px-[7px] pb-[25px] font-medium whitespace-nowrap text-[#474747]"
              }
            >
              {t}
            </a>
          ))}
        </nav>

        <div className="mt-[66px] grid grid-cols-[1255fr_596fr] items-start gap-[67px]">
          <section className="relative rounded-lg bg-white px-[51px] pt-[57px] pb-[98px] shadow-[0_0_2px_rgba(0,0,0,0.06)]">
            <h2 className="text-[32px] leading-10 font-semibold">Lokalizacje</h2>
            <div className="mt-[57px]">
              <WorldMap />
            </div>
            <div className="absolute bottom-[42px] left-[128px]">
              <p className="mb-2">Odbiorcy:</p>
              <ul>
                <li className="flex h-12 items-center gap-[15px] pl-[3px]">
                  <span className="size-[33px] rounded-md bg-[#068b47]" />
                  30000
                </li>
                <li className="flex h-12 items-center gap-[15px] pl-[3px]">
                  <span className="size-[33px] rounded-md bg-[#34b479]" />
                  1000
                </li>
                <li className="flex h-12 items-center gap-[15px] pl-[3px]">
                  <span className="size-[33px] rounded-md bg-[#78cba4]" />
                  700
                </li>
              </ul>
            </div>
          </section>

          <section className="rounded-lg bg-white px-[51px] pt-[57px] pb-[26px] shadow-[0_0_2px_rgba(0,0,0,0.06)]">
            <h2 id="countries" className="text-[32px] leading-10 font-semibold">Państwa</h2>
            <table aria-labelledby="countries" className="mt-[31px] w-full">
              <tbody>
                {countries.map(([name, count]) => (
                  <tr key={name} className="border-b border-[#f0f0f0] last:border-b-0">
                    <th scope="row" className="pt-[26px] pb-[25px] text-left font-normal text-[#474747]">
                      <span className="block w-[220px]">{name}</span>
                    </th>
                    <td className="text-right text-[23px] font-medium">{count}</td>
                  </tr>
                ))}
              </tbody>
            </table>
          </section>
        </div>
      </main>
    </div>
  );
}
